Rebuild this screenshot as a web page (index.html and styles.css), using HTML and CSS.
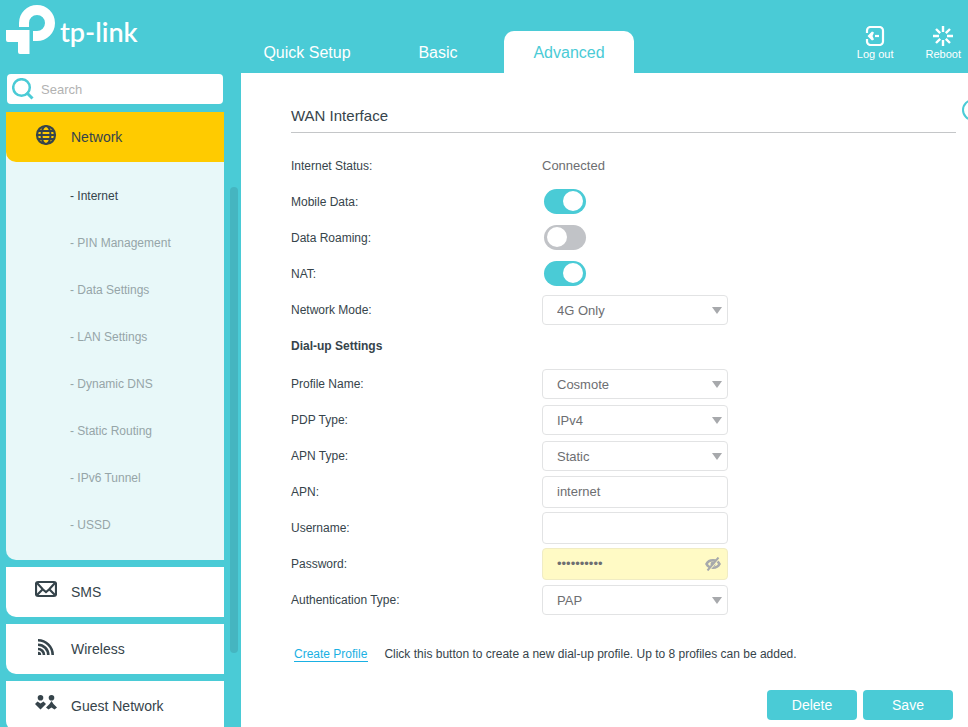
FILE: index.html
```html
<!DOCTYPE html>
<html lang="en">

<head>
  <meta charset="UTF-8">
  <meta name="viewport" content="width=device-width, initial-scale=1.0">
  <title>TP-Link</title>
  <link rel="stylesheet" href="styles.css">
</head>

<body>
  <header class="top">
    <a class="logo" href="#">
      <svg width="56" height="56" viewBox="0 0 56 56" fill="#fff">
        <path d="M19 27v-4a18 18 0 1 1 18 18h-4V31h4a8 8 0 1 0-8-8v4z" />
        <path d="M6 30h23.500v24H20a2 2 0 0 1-2-2V42H8a2 2 0 0 1-2-2z" />
      </svg>
      <span class="logo-text">tp-link</span>
    </a>
    <nav class="tabs">
      <a class="tab" href="#">Quick Setup</a>
      <a class="tab" href="#">Basic</a>
      <a class="tab active" href="#">Advanced</a>
    </nav>
    <div class="actions">
      <button class="action" type="button">
        <svg width="20" height="20" viewBox="0 0 20 20" fill="none" stroke="#fff" stroke-width="2.200">
          <path d="M2 7V4.500A3.500 3.500 0 0 1 5.500 1h9A3.500 3.500 0 0 1 18 4.500v11a3.500 3.500 0 0 1-3.500 3.500h-9A3.500 3.500 0 0 1 2 15.500V13" />
          <path d="M10 10h4" />
          <path d="M2.500 10L7 5.500l2 1L7.500 10 9 13.500l-2 1z" fill="#fff" stroke="none" />
        </svg>
        Log out
      </button>
      <button class="action" type="button">
        <svg width="20" height="20" viewBox="0 0 20 20" stroke="#fff" stroke-width="2.400">
          <path d="M10 0v6M10 14v6M0 10h6M14 10h6M3 3l4.200 4.200M12.800 12.800L17 17M17 3l-4.200 4.200M7.200 12.800L3 17" />
        </svg>
        Reboot
      </button>
    </div>
  </header>

  <div class="page">
    <aside class="sidebar">
      <div class="menu-col">
        <div class="search">
          <svg class="search-icon" width="22" height="22" viewBox="0 0 22 22" fill="none" stroke="#4acbd6" stroke-width="2.500">
            <circle cx="9.500" cy="9.500" r="8.300" />
            <path d="M14.500 14.500l6 6" stroke-width="3" />
          </svg>
          <input class="search-input" type="text" placeholder="Search" aria-label="Search">
        </div>

        <div class="menu-group">
          <a class="menu-item active" href="#">
            <svg class="menu-icon" width="22" height="22" viewBox="0 0 22 22" fill="none" stroke="#36444b" stroke-width="2.200">
              <circle cx="11" cy="11" r="9" />
              <ellipse cx="11" cy="11" rx="4.500" ry="9" stroke-width="2" />
              <path d="M2 11h18M3 7h16M3 15h16" stroke-width="1.800" />
            </svg>
            <span>Network</span>
          </a>
          <div class="submenu">
            <a class="sub current" href="#">- Internet</a>
            <a class="sub" href="#">- PIN Management</a>
            <a class="sub" href="#">- Data Settings</a>
            <a class="sub" href="#">- LAN Settings</a>
            <a class="sub" href="#">- Dynamic DNS</a>
            <a class="sub" href="#">- Static Routing</a>
            <a class="sub" href="#">- IPv6 Tunnel</a>
            <a class="sub" href="#">- USSD</a>
          </div>
        </div>

        <a class="menu-item" href="#">
          <svg class="menu-icon" width="22" height="22" viewBox="0 0 22 22" fill="none" stroke="#36444b" stroke-width="2.200">
            <rect x="1" y="3" width="20" height="14" rx="2" />
            <path d="M2 4l6 6.500 3 2.500 3-2.500L20 4M2 16l6-6M20 16l-6-6" />
          </svg>
          <span>SMS</span>
        </a>
        <a class="menu-item" href="#">
          <svg class="menu-icon" width="22" height="22" viewBox="0 0 22 22" fill="none" stroke="#36444b" stroke-width="2.600">
            <path d="M3 4.300a14.700 14.700 0 0 1 14.700 14.700M3 8.700a10.300 10.300 0 0 1 10.300 10.300M3 13a6 6 0 0 1 6 6" />
            <path d="M3 15.800a3.200 3.200 0 0 1 3.200 3.200H3z" fill="#36444b" stroke="none" />
          </svg>
          <span>Wireless</span>
        </a>
        <a class="menu-item" href="#">
          <svg class="menu-icon" width="22" height="22" viewBox="0 0 22 22" fill="#36444b">
            <circle cx="5.500" cy="4.700" r="2.800" />
            <circle cx="16.500" cy="4.700" r="2.800" />
            <path d="M0 11l2.500-2.500 3 2 3-2L11 11l-5.500 5.500z" />
            <path d="M16.500 8l2 3 3.500 3.500-2.500 2-3-2-3 2-2.500-2 3.500-3.500z" />
          </svg>
          <span>Guest Network</span>
        </a>
      </div>
      <div class="scroll-thumb"></div>
    </aside>

    <main class="content">
      <div class="title-row">
        <h1 class="title">WAN Interface</h1>
        <button class="help" type="button" aria-label="Help"></button>
      </div>

      <form class="form">
        <div class="row">
          <span class="label">Internet Status:</span>
          <span class="value">Connected</span>
        </div>
        <div class="row">
          <label class="label" for="mobile">Mobile Data:</label>
          <input class="toggle" type="checkbox" id="mobile" checked>
        </div>
        <div class="row">
          <label class="label" for="roaming">Data Roaming:</label>
          <input class="toggle" type="checkbox" id="roaming">
        </div>
        <div class="row">
          <label class="label" for="nat">NAT:</label>
          <input class="toggle" type="checkbox" id="nat" checked>
        </div>
        <div class="row">
          <label class="label" for="mode">Network Mode:</label>
          <div class="select-box">
            <select class="field select" id="mode">
              <option>4G Only</option>
            </select>
          </div>
        </div>

        <h2 class="section">Dial-up Settings</h2>

        <div class="row">
          <label class="label" for="profile">Profile Name:</label>
          <div class="select-box">
            <select class="field select" id="profile">
              <option>Cosmote</option>
            </select>
          </div>
        </div>
        <div class="row">
          <label class="label" for="pdp">PDP Type:</label>
          <div class="select-box">
            <select class="field select" id="pdp">
              <option>IPv4</option>
            </select>
          </div>
        </div>
        <div class="row">
          <label class="label" for="apn-type">APN Type:</label>
          <div class="select-box">
            <select class="field select" id="apn-type">
              <option>Static</option>
            </select>
          </div>
        </div>
        <div class="row">
          <label class="label" for="apn">APN:</label>
          <input class="field" type="text" id="apn" value="internet">
        </div>
        <div class="row">
          <label class="label" for="username">Username:</label>
          <input class="field" type="text" id="username">
        </div>
        <div class="row">
          <label class="label" for="password">Password:</label>
          <div class="password-box">
            <input class="field filled" type="password" id="password" value="0123456789">
            <button class="eye" type="button" aria-label="Show password">
              <svg width="16" height="14" viewBox="0 0 16 14" fill="none" stroke="#a7a9ac">
                <path d="M1.500 7C4 2 12 2 14.500 7 12 12 4 12 1.500 7z" stroke-width="2.600" />
                <circle cx="8" cy="7" r="2.500" fill="#a7a9ac" stroke="none" />
                <path d="M4 13.500L14 1.800" stroke="#fffac5" stroke-width="1.200" />
                <path d="M2.500 13.500L13.500 .5" stroke-width="2" />
              </svg>
            </button>
          </div>
        </div>
        <div class="row">
          <label class="label" for="auth">Authentication Type:</label>
          <div class="select-box">
            <select class="field select" id="auth">
              <option>PAP</option>
            </select>
          </div>
        </div>

        <div class="create">
          <a class="create-link" href="#">Create Profile</a>
          <span>Click this button to create a new dial-up profile. Up to 8 profiles can be added.</span>
        </div>

        <div class="buttons">
          <button class="btn" type="button">Delete</button>
          <button class="btn" type="submit">Save</button>
        </div>
      </form>
    </main>
  </div>
</body>

</html>
```
FILE: styles.css
```css
* {
  box-sizing: border-box;
}

body {
  margin: 0;
  height: 100vh;
  display: flex;
  flex-direction: column;
  overflow: hidden;
  background-color: #4acbd6;
  color: #36444b;
  font-family: "Liberation Sans", Arial, sans-serif;
  font-size: 12px;
}

a {
  color: inherit;
  text-decoration: none;
}

button {
  font-family: inherit;
  cursor: pointer;
}

/* header */
.top {
  display: flex;
  flex: none;
  height: 73px;
}

.logo {
  display: flex;
  width: 242px;
  color: #fff;
}

.logo-text {
  margin: 15px 0 0 4px;
  font-family: Lato, sans-serif;
  font-size: 27px;
  font-weight: 600;
  line-height: 34px;
}

.tabs {
  display: flex;
  align-items: flex-end;
  gap: 1px;
}

.tab {
  width: 130px;
  height: 42px;
  padding-top: 1px;
  line-height: 42px;
  border-radius: 10px 10px 0 0;
  text-align: center;
  font-size: 16px;
  color: #fff;
}

.tab.active {
  background-color: #fff;
  color: #4acbd6;
}

.actions {
  display: flex;
  align-items: flex-start;
  gap: 32px;
  margin-left: auto;
  padding: 26px 7px 0 0;
}

.action {
  display: flex;
  flex-direction: column;
  align-items: center;
  gap: 2px;
  padding: 0;
  border: none;
  background: none;
  color: #fff;
  font-size: 11px;
  line-height: 13px;
}

/* sidebar */
.page {
  display: flex;
  flex: 1;
  min-height: 0;
}

.sidebar {
  display: flex;
  flex: none;
  width: 241px;
  padding-left: 6px;
}

.menu-col {
  width: 218px;
}

.search {
  display: flex;
  align-items: center;
  height: 30px;
  margin: 1px 1px 8px;
  padding-left: 5px;
  border-radius: 4px;
  background-color: #fff;
}

.search-icon {
  flex: none;
}

.search-input {
  width: 100%;
  min-width: 0;
  padding: 0 7px;
  border: none;
  background: none;
  font-family: inherit;
  font-size: 13px;
}

.search-input::placeholder {
  color: #b2b2b2;
}

.menu-group {
  margin-bottom: 7px;
  border-radius: 0 0 0 10px;
  background-color: #e8f8f9;
}

.menu-item {
  display: flex;
  align-items: center;
  gap: 14px;
  height: 50px;
  margin-bottom: 7px;
  padding-left: 29px;
  border-radius: 0 0 0 10px;
  background-color: #fff;
  font-size: 14px;
}

.menu-item.active {
  margin-bottom: 0;
  background-color: #ffcb00;
}

.menu-icon {
  margin-bottom: 4px;
}

.submenu {
  padding: 11px 0 11px 64px;
}

.sub {
  display: block;
  line-height: 47px;
  color: #96a5a8;
}

.sub.current {
  color: #36444b;
}

.scroll-thumb {
  width: 8px;
  margin: 114px 0 74px 6px;
  border-radius: 4px;
  background-color: #45b5c0;
}

/* content */
.content {
  flex: 1;
  min-width: 0;
  padding: 26px 12px 0 50px;
  overflow: hidden;
  background-color: #fff;
}

.title-row {
  position: relative;
  height: 34px;
  margin-bottom: 15px;
  border-bottom: 1px solid #c4c6c8;
}

.title {
  margin: 0;
  font-size: 15px;
  font-weight: normal;
  line-height: 34px;
}

.help {
  position: absolute;
  top: 0;
  right: -28px;
  width: 22px;
  height: 22px;
  border: 2px solid #4acbd6;
  border-radius: 50%;
  background: none;
}

.row {
  display: flex;
  align-items: center;
  height: 36px;
}

.label {
  width: 251px;
}

.value {
  padding-bottom: 2px;
  font-size: 13px;
  color: #6d6e71;
}

.toggle {
  display: flex;
  align-items: center;
  appearance: none;
  width: 42px;
  height: 25px;
  margin: 0 2px 2px;
  padding: 0 3px;
  border-radius: 13px;
  background-color: #c1c3c7;
}

.toggle::before {
  content: "";
  width: 20px;
  height: 20px;
  border-radius: 50%;
  background-color: #fff;
}

.toggle:checked {
  justify-content: flex-end;
  background-color: #4acbd6;
}

.field {
  display: block;
  width: 186px;
  height: 32px;
  padding: 0 14px 2px;
  border: 1px solid #e2e3e4;
  border-radius: 4px;
  background-color: #fff;
  color: #6d6e71;
  font-family: inherit;
  font-size: 13px;
}

.select {
  appearance: none;
  height: 30px;
  padding-bottom: 0;
}

.select-box,
.password-box {
  position: relative;
}

.select-box::after {
  content: "";
  position: absolute;
  top: 12px;
  right: 6px;
  border: 5px solid transparent;
  border-top: 7px solid #a7a9ac;
  border-bottom: none;
  pointer-events: none;
}

.filled {
  border-color: #f0ecc4;
  background-color: #fffac5;
}

.eye {
  position: absolute;
  top: 9px;
  right: 7px;
  display: flex;
  padding: 0;
  border: none;
  background: none;
}

.section {
  height: 36px;
  margin: 0 0 2px;
  font-size: 12px;
  line-height: 36px;
}

.create {
  display: flex;
  align-items: center;
  gap: 16px;
  height: 36px;
  margin: 18px 0;
  padding-left: 3px;
}

.create-link {
  padding-right: 1px;
  border-bottom: 1px solid #1ab0e3;
  color: #1ab0e3;
}

.buttons {
  display: flex;
  justify-content: flex-end;
  gap: 6px;
  padding-right: 3px;
}

.btn {
  width: 90px;
  height: 30px;
  border: none;
  border-radius: 4px;
  background-color: #4acbd6;
  color: #fff;
  font-size: 14px;
}
```
